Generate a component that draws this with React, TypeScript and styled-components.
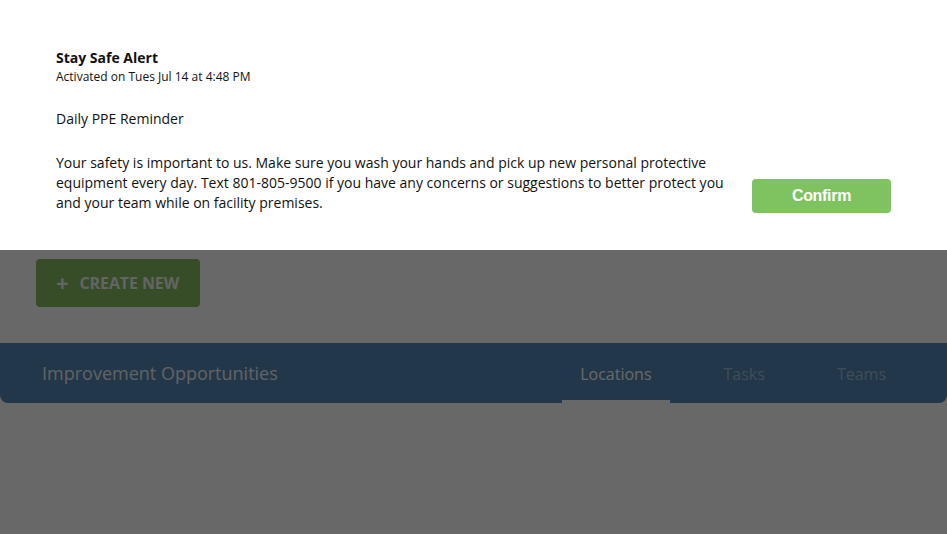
import React from "react";
import styled, { createGlobalStyle } from "styled-components";

const Global = createGlobalStyle`
  html, body { margin: 0; padding: 0; background: #ffffff; }
  body { font-family: "Open Sans", "Noto Sans", sans-serif; width: 947px; height: 534px; overflow: hidden; }
  * { box-sizing: border-box; }
`;

const Page = styled.div`
  position: relative;
  width: 947px;
  height: 534px;
  background: #ffffff;
  display: flex;
  flex-direction: column;
`;

const Toolbar = styled.div`
  padding: 259px 0 0 36px;
  display: flex;
`;

const CreateButton = styled.button`
  width: 164px;
  height: 48px;
  border: none;
  border-radius: 4px;
  background: #84bd60;
  color: #f4f4f4;
  font-family: "Open Sans", sans-serif;
  font-weight: 700;
  font-size: 16px;
  display: flex;
  align-items: center;
  padding: 0 0 0 20px;
  gap: 11px;
  letter-spacing: -0.1px;
`;

const Plus = styled.span`
  font-size: 22px;
  font-weight: 700;
  line-height: 1;
  margin-top: -3px;
`;

const SectionBar = styled.div`
  margin-top: 36px;
  height: 60px;
  background: #5387b5;
  border-radius: 0 0 8px 8px;
  display: flex;
  align-items: stretch;
  justify-content: space-between;
  padding: 0 43px 0 42px;
`;

const SectionTitle = styled.div`
  display: flex;
  align-items: center;
  color: #f0f0f0;
  font-size: 18px;
  padding-bottom: 1px;
`;

const Tabs = styled.div`
  display: flex;
  gap: 36px;
`;

const Tab = styled.div<{ $active?: boolean }>`
  display: flex;
  align-items: center;
  padding: 4px 18px 0;
  font-size: 16px;
  color: ${(p) => (p.$active ? "#ffffff" : "rgba(255,255,255,0.45)")};
  border-bottom: 3px solid ${(p) => (p.$active ? "#ffffff" : "transparent")};
`;

const Overlay = styled.div`
  position: absolute;
  inset: 0;
  background: rgba(0, 0, 0, 0.592);
`;

const AlertPanel = styled.div`
  position: absolute;
  left: 0;
  top: 0;
  width: 947px;
  height: 250px;
  background: #ffffff;
  padding: 48px 56px 0 56px;
  color: #111;
`;

const AlertTitle = styled.div`
  font-weight: 700;
  font-size: 14px;
  line-height: 20px;
`;

const AlertMeta = styled.div`
  font-size: 12px;
  line-height: 16px;
  margin-top: 1px;
`;

const AlertSubject = styled.div`
  font-size: 14px;
  line-height: 20px;
  margin-top: 24px;
`;

const AlertRow = styled.div`
  display: flex;
  align-items: flex-end;
  justify-content: space-between;
  margin-top: 24px;
`;

const AlertBody = styled.p`
  margin: 0;
  width: 680px;
  font-size: 14px;
  line-height: 20px;
`;

const ConfirmButton = styled.button`
  width: 139px;
  height: 34px;
  margin-bottom: 0;
  border: none;
  border-radius: 4px;
  background: #7fc260;
  color: #ffffff;
  font-family: "Liberation Sans", Arial, sans-serif;
  font-size: 16px;
  font-weight: 700;
  letter-spacing: -0.3px;
`;

export default function App() {
  return (
    <>
      <Global />
      <Page>
        <Toolbar>
          <CreateButton>
            <Plus>+</Plus>
            CREATE NEW
          </CreateButton>
        </Toolbar>
        <SectionBar>
          <SectionTitle>Improvement Opportunities</SectionTitle>
          <Tabs>
            <Tab $active>Locations</Tab>
            <Tab>Tasks</Tab>
            <Tab>Teams</Tab>
          </Tabs>
        </SectionBar>
        <Overlay />
        <AlertPanel>
          <AlertTitle>Stay Safe Alert</AlertTitle>
          <AlertMeta>Activated on Tues Jul 14 at 4:48 PM</AlertMeta>
          <AlertSubject>Daily PPE Reminder</AlertSubject>
          <AlertRow>
            <AlertBody>
              Your safety is important to us. Make sure you wash your hands and pick up new personal protective
              equipment every day. Text 801-805-9500 if you have any concerns or suggestions to better protect you
              and your team while on facility premises.
            </AlertBody>
            <ConfirmButton>Confirm</ConfirmButton>
          </AlertRow>
        </AlertPanel>
      </Page>
    </>
  );
}
